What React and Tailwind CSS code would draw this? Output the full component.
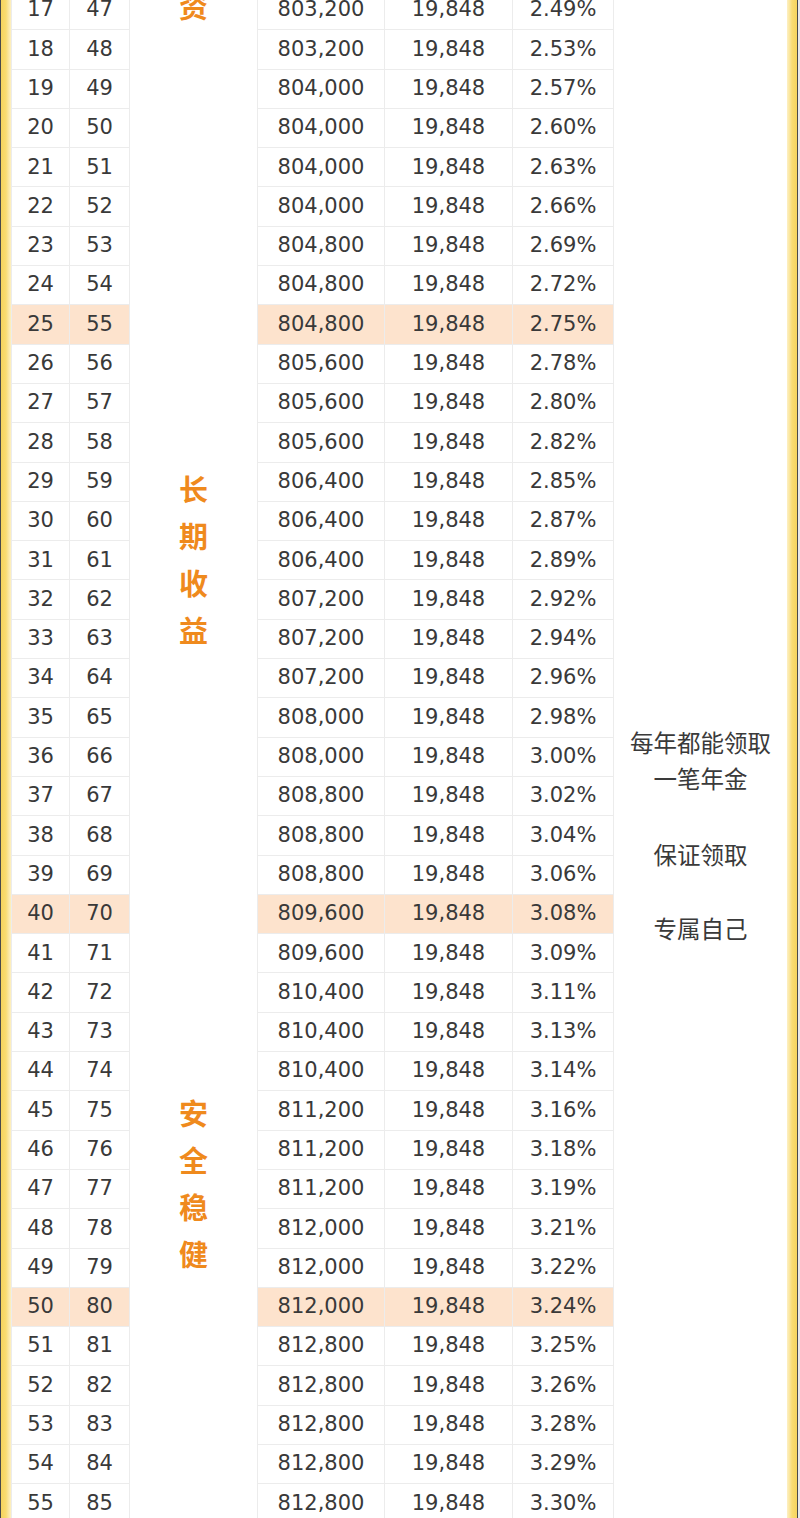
import React from 'react';

const rows = [
    [17, '803,200', '2.49%'], [18, '803,200', '2.53%'], [19, '804,000', '2.57%'],
    [20, '804,000', '2.60%'], [21, '804,000', '2.63%'], [22, '804,000', '2.66%'],
    [23, '804,800', '2.69%'], [24, '804,800', '2.72%'], [25, '804,800', '2.75%'],
    [26, '805,600', '2.78%'], [27, '805,600', '2.80%'], [28, '805,600', '2.82%'],
    [29, '806,400', '2.85%'], [30, '806,400', '2.87%'], [31, '806,400', '2.89%'],
    [32, '807,200', '2.92%'], [33, '807,200', '2.94%'], [34, '807,200', '2.96%'],
    [35, '808,000', '2.98%'], [36, '808,000', '3.00%'], [37, '808,800', '3.02%'],
    [38, '808,800', '3.04%'], [39, '808,800', '3.06%'], [40, '809,600', '3.08%'],
    [41, '809,600', '3.09%'], [42, '810,400', '3.11%'], [43, '810,400', '3.13%'],
    [44, '810,400', '3.14%'], [45, '811,200', '3.16%'], [46, '811,200', '3.18%'],
    [47, '811,200', '3.19%'], [48, '812,000', '3.21%'], [49, '812,000', '3.22%'],
    [50, '812,000', '3.24%'], [51, '812,800', '3.25%'], [52, '812,800', '3.26%'],
    [53, '812,800', '3.28%'], [54, '812,800', '3.29%'], [55, '812,800', '3.30%'],
];

// 高亮的保单年度
const highlight = [25, 40, 50];

const num = "font-['DejaVu_Sans','Noto_Sans_CJK_SC',sans-serif] text-[21px] text-[#393939]";
const cjk = "font-['Noto_Sans_CJK_SC',sans-serif]";

const App = () => {
    return (
        <div className="flex w-[800px] h-[1518px] overflow-hidden bg-white items-start">
            {/* 左侧黄边 */}
            <div className="w-[11px] h-full border-l border-[#4a4a4a] bg-gradient-to-r from-[#f7d45c] via-[#f9dc72] to-[#fdf0c4] shrink-0" />

            {/* 年度 / 年龄 */}
            <div className={`flex flex-col -mt-[9px] border-l border-[#ececec] ${num}`}>
                {rows.map(([y]) => (
                    <div
                        key={y}
                        className={`flex h-[39.3px] border-b border-[#ececec] ${highlight.includes(y) ? 'bg-[#fde3cd]' : ''}`}
                    >
                        <div className="w-[58px] border-r border-[#ececec] flex items-center justify-center">{y}</div>
                        <div className="w-[60px] border-r border-[#ececec] flex items-center justify-center">{y + 30}</div>
                    </div>
                ))}
            </div>

            {/* 竖排标语 */}
            <div className={`w-[127px] flex flex-col items-center -mt-[18.5px] text-[29px] font-bold text-[#ef8a1d] leading-[47px] ${cjk}`}>
                <div>资</div>
                <div className="mt-[436px] flex flex-col items-center">
                    <span>长</span><span>期</span><span>收</span><span>益</span>
                </div>
                <div className="mt-[436px] flex flex-col items-center">
                    <span>安</span><span>全</span><span>稳</span><span>健</span>
                </div>
            </div>

            {/* 现金价值 / 年金 / IRR */}
            <div className={`flex flex-col -mt-[9px] border-l border-[#ececec] ${num}`}>
                {rows.map(([y, cash, irr]) => (
                    <div
                        key={y}
                        className={`flex h-[39.3px] border-b border-[#ececec] ${highlight.includes(y) ? 'bg-[#fde3cd]' : ''}`}
                    >
                        <div className="w-[127px] border-r border-[#ececec] flex items-center justify-center">{cash}</div>
                        <div className="w-[128px] border-r border-[#ececec] flex items-center justify-center">19,848</div>
                        <div className="w-[101px] border-r border-[#ececec] flex items-center justify-center">{irr}</div>
                    </div>
                ))}
            </div>

            {/* 右侧说明 */}
            <div className={`flex-1 flex flex-col items-center pt-[724px] text-[23.5px] leading-[36px] text-[#3a3a3a] ${cjk}`}>
                <div>每年都能领取</div>
                <div>一笔年金</div>
                <div className="mt-[40px]">保证领取</div>
                <div className="mt-[38px]">专属自己</div>
            </div>

            {/* 右侧黄边 */}
            <div className="w-[13px] h-full flex shrink-0">
                <div className="w-[10px] bg-gradient-to-r from-[#fdf0c4] via-[#f9dc72] to-[#f7d45c]" />
                <div className="w-[1px] bg-[#4a4a4a]" />
                <div className="w-[2px] bg-[#e8e8e8]" />
            </div>
        </div>
    );
};

export default App;
